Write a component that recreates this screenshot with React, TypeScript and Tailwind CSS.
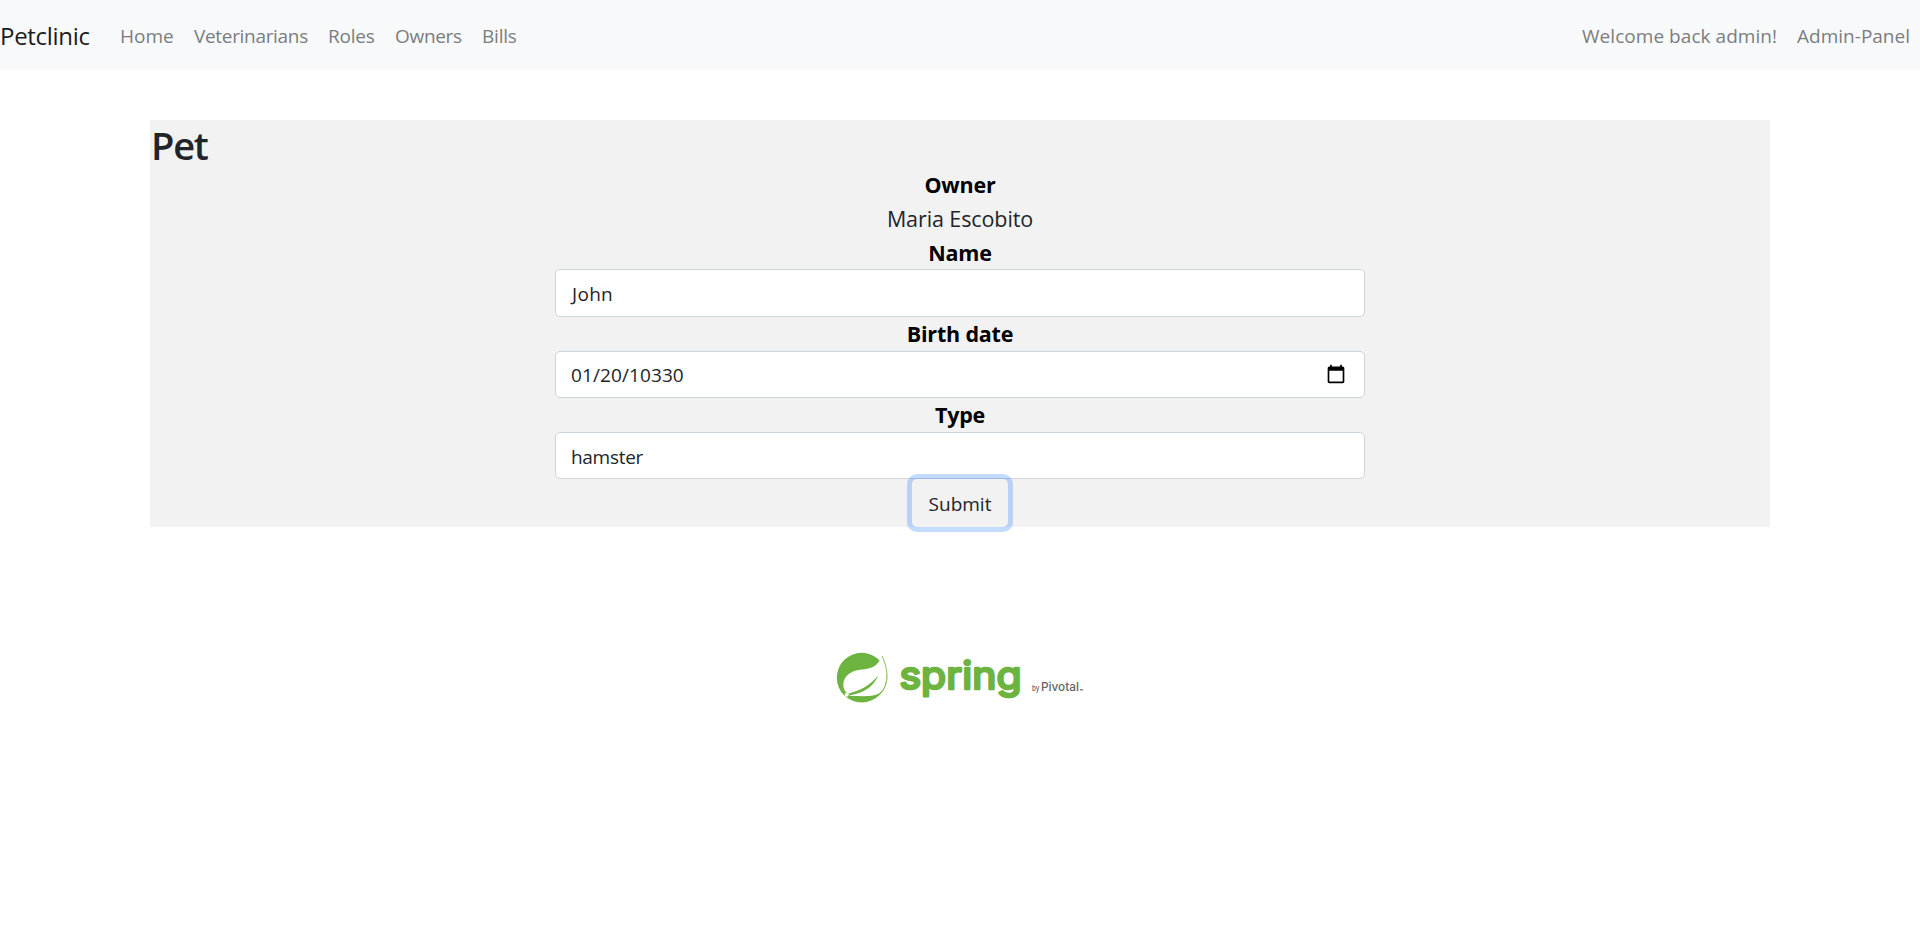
const links = [
  { label: "Home", cls: "w-[54px]" },
  { label: "Veterinarians", cls: "w-[114px] tracking-[-0.32px]" },
  { label: "Roles", cls: "w-[47px] tracking-[-0.2px]" },
  { label: "Owners", cls: "w-[67px] tracking-[-0.3px]" },
  { label: "Bills", cls: "w-[35px] tracking-[-0.2px]" },
];

const input =
  "flex h-[47.5px] w-[810px] items-center justify-between rounded-[5px] border border-[#ced4da] bg-white px-[15px] text-[19px] text-[#212529]";
const label = "h-[33.75px] text-[21.5px] leading-[34.5px] tracking-[-0.2px] font-bold text-black";

function Navbar() {
  return (
    <nav className="flex h-[70px] items-center bg-[#f8f9fb] pt-[2px] text-[19px] whitespace-nowrap text-[#7b7d7f]">
      <a className="mr-5 w-[90px] text-[24px] tracking-[-0.3px] text-[#1b1c1d]">Petclinic</a>
      <ul className="flex flex-1 gap-5 pl-[10px]">
        {links.map((l) => (
          <li key={l.label} className={l.cls}>
            {l.label}
          </li>
        ))}
      </ul>
      <ul className="flex gap-5 pr-[10px]">
        <li className="tracking-[0.05px]">Welcome back admin!</li>
        <li>Admin-Panel</li>
      </ul>
    </nav>
  );
}

function CalendarIcon() {
  return (
    <svg viewBox="0 0 24 24" className="mr-[3px] size-5" fill="#000">
      <path d="M20 3h-1V1h-2v2H7V1H5v2H4c-1.1 0-2 .9-2 2v16c0 1.1.9 2 2 2h16c1.1 0 2-.9 2-2V5c0-1.1-.9-2-2-2zm0 18H4V8h16v13z" />
    </svg>
  );
}

function PetForm() {
  return (
    <main className="mx-auto mt-[50px] flex h-[407px] w-[1620px] flex-col items-center bg-[#f2f2f2]">
      <h1 className="h-12 self-start pl-px text-[38px] leading-[51px] font-semibold tracking-[-1.2px] text-[#212529]">Pet</h1>
      <div className={label}>Owner</div>
      <div className="h-[33.75px] text-[21.5px] leading-[34.5px] tracking-[-0.1px] text-[#212529]">Maria Escobito</div>
      <div className={label}>Name</div>
      <div className={input}>
        <span className="pt-[2px] pl-px tracking-[0.3px]">John</span>
      </div>
      <div className={label}>Birth date</div>
      <div className={input}>
        <span className="pt-[2px] tracking-[0.1px]">01/20/10330</span>
        <CalendarIcon />
      </div>
      <div className={label}>Type</div>
      <div className={input}>
        <span className="pt-[4px] tracking-[-0.3px]">hamster</span>
      </div>
      <button className="h-[47.5px] w-24 rounded-[5px] pt-[2px] text-[19px] text-[#212529] shadow-[0_0_0_5px_rgba(13,110,253,0.25)]">
        Submit
      </button>
    </main>
  );
}

function SpringLogo() {
  return (
    <div className="mx-auto mt-[118px] flex w-[260px] items-start">
      <svg viewBox="0 0 210 195" className="h-[65px] w-[70px] shrink-0">
        <circle cx="95" cy="98" r="74.5" fill="#6db33f" />
        <path
          d="M156 33C143 63 128 69 103 73C67 75 42 90 40 116C39 130 45 140 54 146L61 153C95 153 128 156 144 147C171 134 177 90 156 33Z"
          fill="#fff"
        />
        <path d="M156 33C177 78 177 120 150 147" fill="none" stroke="#6db33f" strokeWidth="2.5" />
        <path d="M54 146C92 136 122 121 145 91C130 128 98 145 61 151Z" fill="#6db33f" />
        <circle cx="50" cy="149" r="6" fill="#fff" />
      </svg>
      <svg viewBox="0 0 190 70" className="h-[70px] w-[190px] shrink-0 overflow-visible">
        <text
          x="-0.5"
          y="44"
          textLength="122"
          lengthAdjust="spacingAndGlyphs"
          fill="#6db33f"
          stroke="#6db33f"
          strokeWidth="2.6"
          strokeLinejoin="round"
          className="font-['Inter',sans-serif] text-[38px] font-normal"
        >
          spring
        </text>
        <text x="132" y="45.5" textLength="7.5" lengthAdjust="spacingAndGlyphs" fill="#666" className="font-['Inter',sans-serif] text-[8px] font-medium">
          by
        </text>
        <text x="141" y="45.5" textLength="38" lengthAdjust="spacingAndGlyphs" fill="#666" className="font-['Inter',sans-serif] text-[12px] font-medium">
          Pivotal
        </text>
        <rect x="180" y="44" width="3" height="1.5" fill="#888" />
      </svg>
    </div>
  );
}

export default function App() {
  return (
    <div className="min-h-[934px] bg-white font-['Open_Sans','Noto_Sans',sans-serif]">
      <Navbar />
      <PetForm />
      <SpringLogo />
    </div>
  );
}
